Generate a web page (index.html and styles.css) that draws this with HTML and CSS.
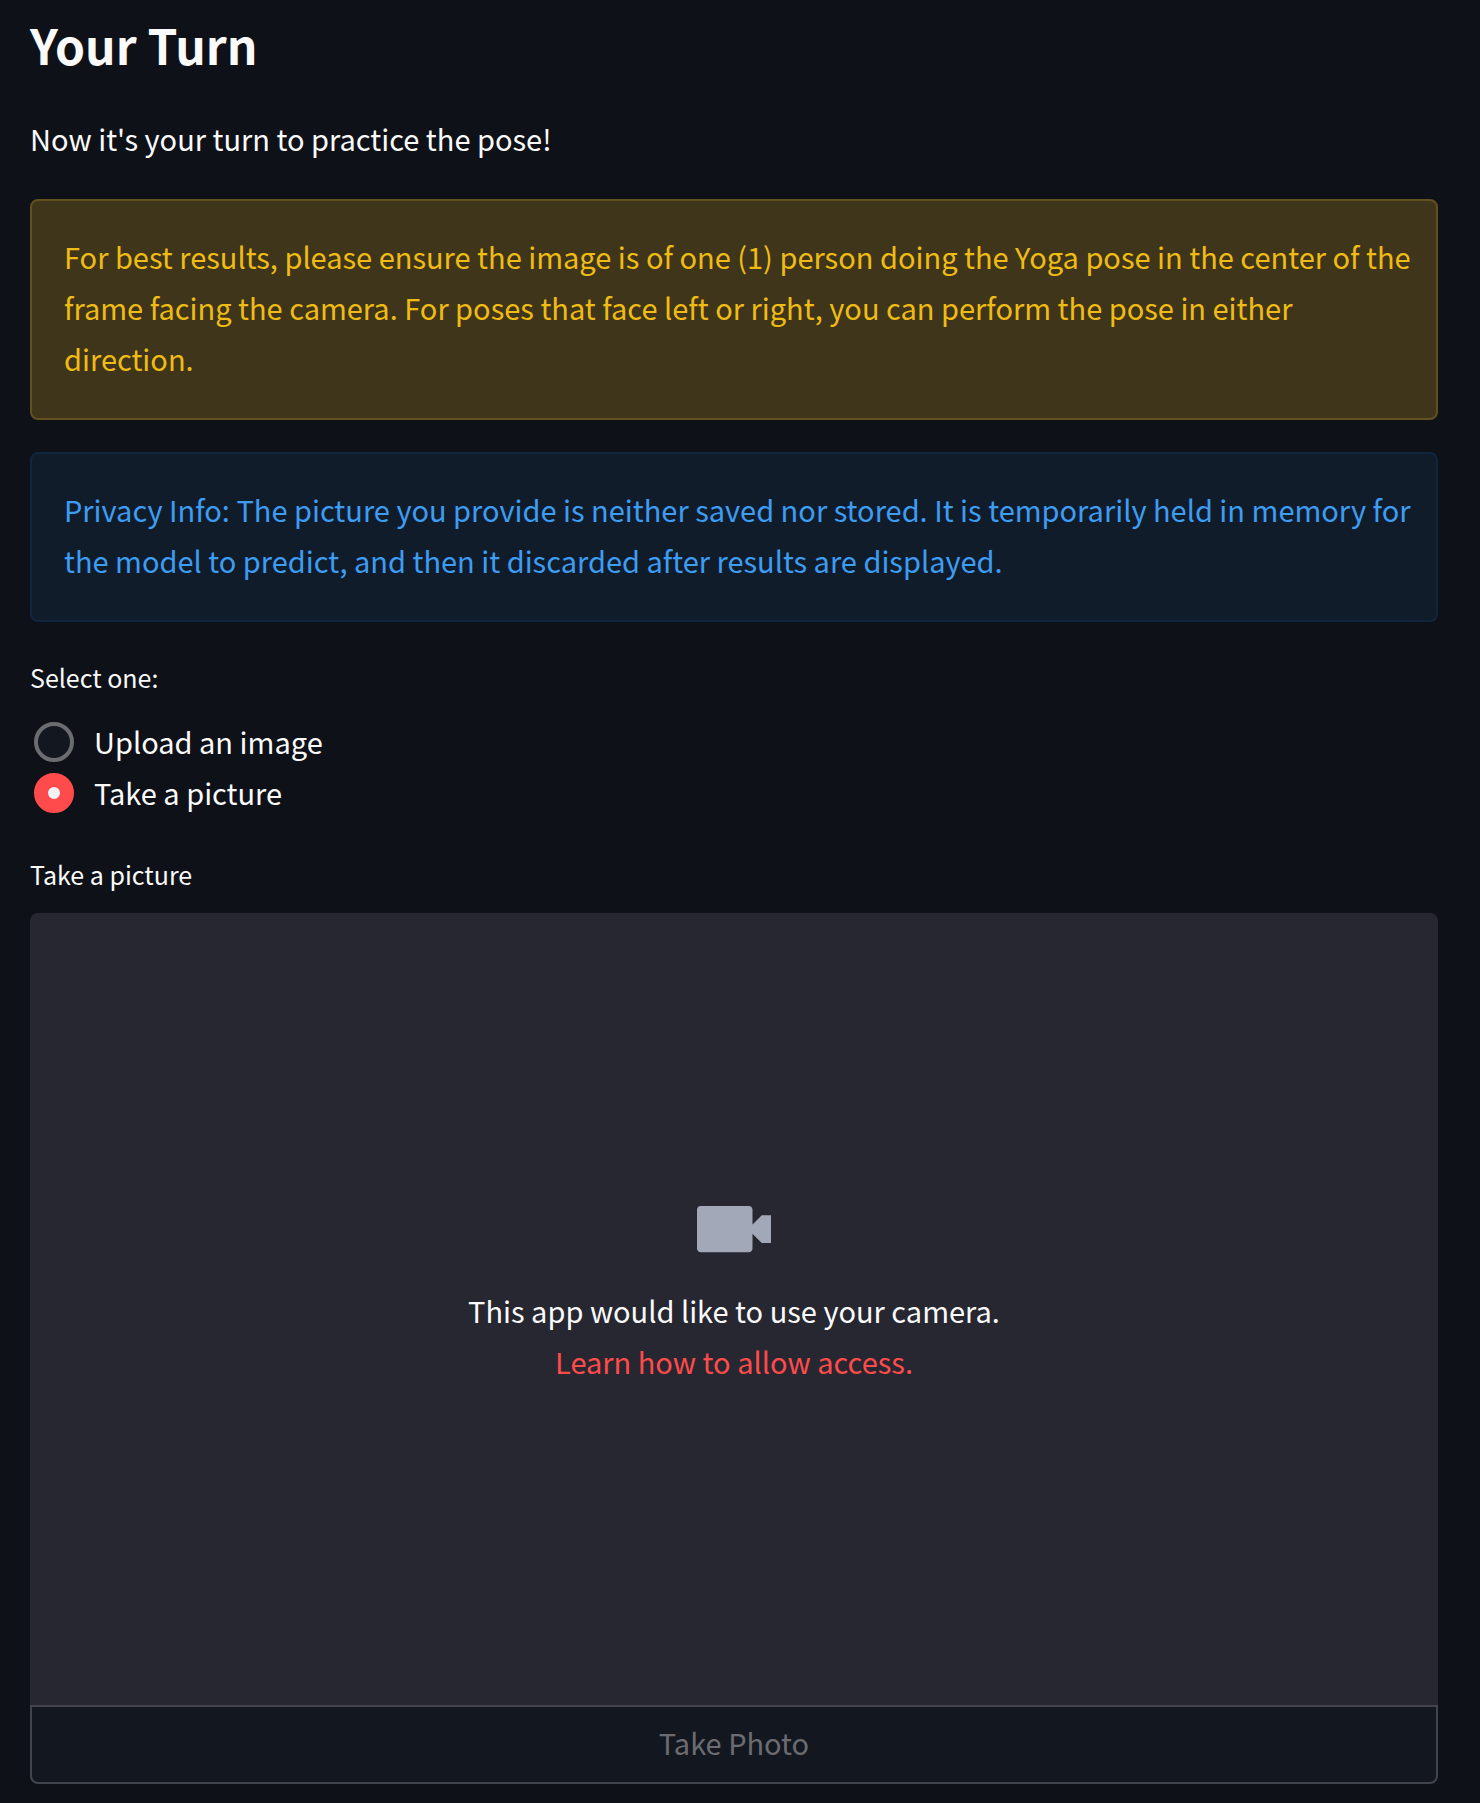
FILE: index.html
```html
<!DOCTYPE html>
<html lang="en">
<head>
<meta charset="utf-8">
<meta name="viewport" content="width=device-width, initial-scale=1">
<title>Your Turn</title>
<link rel="stylesheet" href="styles.css">
</head>
<body>
<main class="page">
  <h1 class="title">Your Turn</h1>
  <p class="intro">Now it's your turn to practice the pose!</p>
  <div class="alert alert-warning">For best results, please ensure the image is of one (1) person doing the Yoga pose in the center of the frame facing the camera. For poses that face left or right, you can perform the pose in either direction.</div>
  <div class="alert alert-info">Privacy Info: The picture you provide is neither saved nor stored. It is temporarily held in memory for the model to predict, and then it discarded after results are displayed.</div>
  <fieldset class="choices">
    <legend class="label">Select one:</legend>
    <label class="choice"><input class="radio" type="radio" name="source" value="upload">Upload an image</label>
    <label class="choice"><input class="radio" type="radio" name="source" value="camera" checked>Take a picture</label>
  </fieldset>
  <section class="camera" aria-labelledby="camera-label">
    <h2 class="label" id="camera-label">Take a picture</h2>
    <div class="viewfinder">
      <svg class="camera-icon" viewBox="0 0 8 8" aria-hidden="true"><path d="M.4 1.5h5.200c.22 0 .4.18.4.4v1.600l1-1h1v3h-1l-1-1v1.600c0 .22-.18.4-.4.4H.4c-.22 0-.4-.18-.4-.4V1.900c0-.22.18-.4.4-.4z"/></svg>
      <p class="prompt">This app would like to use your camera.</p>
      <a class="help" href="#">Learn how to allow access.</a>
    </div>
    <button class="shutter" type="button" disabled>Take Photo</button>
  </section>
</main>
</body>
</html>
```

FILE: styles.css
```css
* {
  box-sizing: border-box;
}

body {
  margin: 0;
  background: #0e1117;
  color: #fafafa;
  font-family: "Noto Sans CJK SC", "Noto Sans", sans-serif;
  font-size: 29px;
  line-height: 51px;
}

.page {
  padding: 6px 42px 19px 30px;
}

.title {
  margin: 0;
  font-size: 48px;
  font-weight: 700;
  line-height: 76px;
}

.intro {
  margin: 31px 0 35px;
}

.alert {
  margin-bottom: 32px;
  padding: 30px 24px 34px 32px;
  border: 2px solid;
  border-radius: 8px;
}

.alert-warning {
  border-color: #62511e;
  background: #3e351b;
  color: #f0bc14;
}

.alert-info {
  border-color: #10263f;
  background: #111c2a;
  color: #3d9df3;
}

.choices {
  margin: 0;
  padding: 0;
  border: 0;
}

.label {
  margin: 0 0 16px;
  padding: 0;
  font-size: 25px;
  font-weight: 400;
  line-height: 46px;
}

.choice {
  display: flex;
  align-items: center;
  gap: 20px;
  padding-left: 4px;
}

.radio {
  appearance: none;
  width: 40px;
  height: 40px;
  margin: 0;
  border: 4px solid #6b6c70;
  border-radius: 50%;
  background: #131720;
}

.radio:checked {
  border: 14px solid #ff4b4b;
  background: #f0f2f6;
}

.camera {
  margin-top: 33px;
}

.viewfinder {
  display: flex;
  flex-direction: column;
  align-items: center;
  justify-content: center;
  padding-bottom: 40px;
  aspect-ratio: 16 / 9;
  border-radius: 8px 8px 0 0;
  background: #262730;
}

.camera-icon {
  width: 74px;
  height: 74px;
  margin-bottom: 19px;
  fill: #a3a8b8;
}

.prompt {
  margin: 0;
}

.help {
  color: #ff4b4b;
  text-decoration: none;
}

.shutter {
  width: 100%;
  padding: 10px 12px 14px;
  border: 2px solid #41444c;
  border-radius: 0 0 8px 8px;
  background: #131720;
  color: #6b6c70;
  font: inherit;
}
```
